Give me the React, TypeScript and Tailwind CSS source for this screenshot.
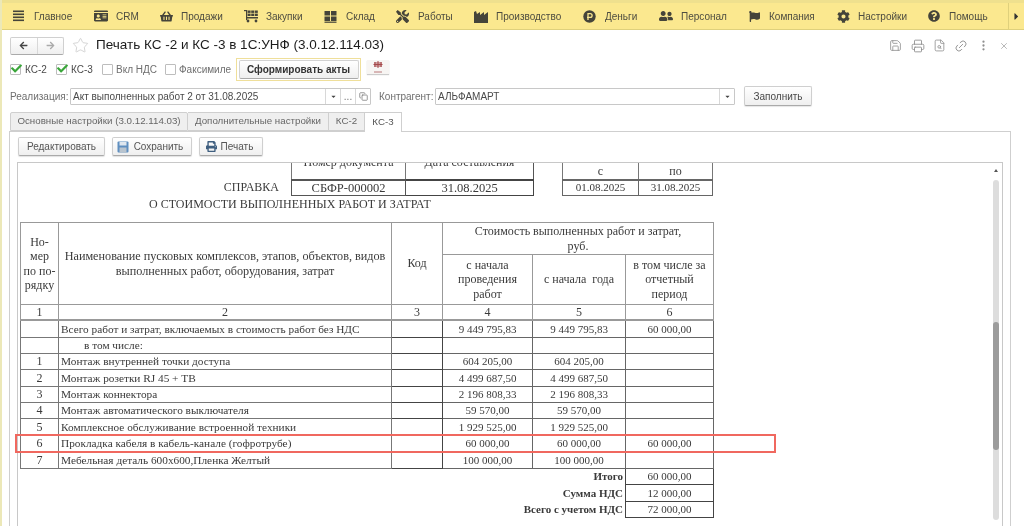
import React from "react";
import { FaIdCard, FaShoppingBasket, FaTools, FaUserFriends, FaFlag, FaCog, FaQuestionCircle, FaArrowLeft, FaArrowRight, FaPrint, FaCaretDown, FaCaretRight, FaCheck } from "react-icons/fa";
import { Save, Printer, FileSearch, Link2, MoreVertical, X, Star, Copy } from "lucide-react";

const ic = "#45443a";
const Bars = () => (<svg width="12" height="12" viewBox="0 0 12 12" fill={ic}><rect y="0.5" width="11" height="1.6"/><rect y="3.5" width="11" height="1.6"/><rect y="6.5" width="11" height="1.6"/><rect y="9.5" width="11" height="1.6"/></svg>);
const Cart = () => (<svg width="15" height="14" viewBox="0 0 15 14" fill={ic}><rect x="0" y="1" width="3" height="1.2"/><rect x="2" y="1" width="1.2" height="10"/><rect x="3.6" y="1.5" width="3" height="2.4"/><rect x="7.2" y="1.5" width="3" height="2.4"/><rect x="10.8" y="1.5" width="3" height="2.4"/><rect x="3.6" y="4.6" width="3" height="2.4"/><rect x="7.2" y="4.6" width="3" height="2.4"/><rect x="10.8" y="4.6" width="3" height="2.4"/><rect x="2" y="8" width="12" height="1.5"/><circle cx="4" cy="12" r="1.4"/><circle cx="12" cy="12" r="1.4"/></svg>);
const Wh = () => (<svg width="13" height="13" viewBox="0 0 13 13" fill={ic}><rect x="0.5" y="1" width="5.5" height="4.5"/><rect x="7" y="1" width="5.5" height="4.5"/><rect x="0.5" y="6.5" width="5.5" height="4.5"/><rect x="7" y="6.5" width="5.5" height="4.5"/><rect x="0.5" y="11.6" width="12" height="1.2"/></svg>);
const Factory = () => (<svg width="14" height="13" viewBox="0 0 14 13" fill={ic}><path d="M0 13V2l2-1 1 3 3-2v3l4-3v3l4-3v11z"/></svg>);
const Rub = () => (<svg width="13" height="13" viewBox="0 0 13 13"><circle cx="6.5" cy="6.5" r="6.2" fill={ic}/><path d="M5 10V3.6h2.2a1.8 1.8 0 0 1 0 3.8H4" fill="none" stroke="#fbe88f" strokeWidth="1.3"/></svg>);
const Floppy = () => (<svg width="12" height="12" viewBox="0 0 12 12"><rect x="0.5" y="0.5" width="11" height="11" rx="1" fill="#5f8fc0"/><rect x="2.5" y="1" width="7" height="3.5" fill="#dfe7ef"/><rect x="2.5" y="6.5" width="7" height="5" fill="#b9c4ce"/></svg>);
const Stamp = () => (<svg width="22" height="14" viewBox="0 0 22 14"><rect width="22" height="14" fill="#f7f5f3"/><path d="M11 1v7M8 2v5M14 2v5M6.5 4.5h9M7 3h8M7 6h8" stroke="#a5484a" strokeWidth="1"/><path d="M7 12h8" stroke="#b9787a" strokeWidth="1"/></svg>);

const menu = [
  { t: "Главное", w: "w-[81px]", b: "w-[21px]", i: <Bars /> },
  { t: "CRM", w: "w-[66px]", b: "w-[22px]", i: <FaIdCard size={14} color={ic} /> },
  { t: "Продажи", w: "w-[84px]", b: "w-[21px]", i: <FaShoppingBasket size={13} color={ic} /> },
  { t: "Закупки", w: "w-[80px]", b: "w-[22px]", i: <Cart /> },
  { t: "Склад", w: "w-[72px]", b: "w-[22px]", i: <Wh /> },
  { t: "Работы", w: "w-[78px]", b: "w-[22px]", i: <FaTools size={13} color={ic} /> },
  { t: "Производство", w: "w-[109px]", b: "w-[22px]", i: <Factory /> },
  { t: "Деньги", w: "w-[76px]", b: "w-[22px]", i: <Rub /> },
  { t: "Персонал", w: "w-[90px]", b: "w-[22px]", i: <FaUserFriends size={14} color={ic} /> },
  { t: "Компания", w: "w-[88px]", b: "w-[20px]", i: <FaFlag size={11} color={ic} /> },
  { t: "Настройки", w: "w-[91px]", b: "w-[21px]", i: <FaCog size={13} color={ic} /> },
  { t: "Помощь", w: "w-[70px]", b: "w-[21px]", i: <FaQuestionCircle size={12} color={ic} /> },
];

const Box = ({ on }: { on?: boolean }) => (
  <span className="relative w-[11px] h-[11px] border border-[#bdbdbd] rounded-[1px] bg-white shrink-0">
    {on && <FaCheck size={11} color="#3aa63a" className="absolute left-[0px] top-[-2px]" />}
  </span>
);

const Btn = ({ w, children }: { w: string; children: React.ReactNode }) => (
  <div className={`${w} h-[19px] flex items-center justify-center border border-[#cfcfcf] border-b-[#aaaaaa] rounded-[2px] bg-gradient-to-b from-white to-[#efefef] text-[10px] text-[#555] shadow-[0_1px_1px_rgba(0,0,0,0.12)]`}>
    {children}
  </div>
);

const c = "border border-[#777] p-0 text-center align-middle";
const rows: [string, string, string, string, string, string, string][] = [
  ["", "Всего работ и затрат, включаемых в стоимость работ без НДС", "9 449 795,83", "9 449 795,83", "60 000,00", "h-[17px]", ""],
  ["", "в том числе:", "", "", "", "h-[16px]", "pl-[25px]"],
  ["1", "Монтаж внутренней точки доступа", "604 205,00", "604 205,00", "", "h-[16px]", ""],
  ["2", "Монтаж розетки RJ 45 + ТВ", "4 499 687,50", "4 499 687,50", "", "h-[17px]", ""],
  ["3", "Монтаж коннектора", "2 196 808,33", "2 196 808,33", "", "h-[16px]", ""],
  ["4", "Монтаж автоматического выключателя", "59 570,00", "59 570,00", "", "h-[16px]", ""],
  ["5", "Комплексное обслуживание встроенной техники", "1 929 525,00", "1 929 525,00", "", "h-[17px]", ""],
  ["6", "Прокладка кабеля в кабель-канале (гофротрубе)", "60 000,00", "60 000,00", "60 000,00", "h-[16px]", ""],
  ["7", "Мебельная деталь 600х600,Пленка Желтый", "100 000,00", "100 000,00", "", "h-[17px]", ""],
];
const totals: [string, string, string][] = [["Итого", "60 000,00", "h-[16px]"], ["Сумма НДС", "12 000,00", "h-[17px]"], ["Всего с учетом НДС", "72 000,00", "h-[16px]"]];

export default function App() {
  return (
    <div className="w-[1024px] h-[526px] overflow-hidden bg-white flex flex-col border-l-2 border-[#ece8b8] font-['Liberation_Sans',Arial,sans-serif] text-[#4a4a4a] blur-[0.4px]">
      {/* section panel */}
      <div className="h-[30px] shrink-0 flex items-center bg-[#fbe88f] border-t-[3px] border-t-[#efe08e] border-b border-b-[#dfd07c] pl-[11px] text-[10px] text-[#4d4c40]">
        {menu.map((m) => (
          <div key={m.t} className={`${m.w} flex items-center shrink-0`}>
            <span className={`${m.b} flex items-center shrink-0`}>{m.i}</span>
            {m.t}
          </div>
        ))}
        <div className="ml-auto w-[16px] h-full border-l border-[#dfd07c] flex items-center justify-center"><FaCaretRight size={11} color="#333" /></div>
      </div>

      {/* title */}
      <div className="h-[27px] mt-[2px] shrink-0 flex items-center pl-[8px] pr-[15px]">
        <div className="w-[54px] h-[18px] flex border border-[#d0d0d0] border-b-[#aaa] rounded-[2px] bg-gradient-to-b from-white to-[#efefef]">
          <span className="flex-1 flex items-center justify-center border-r border-[#d8d8d8]"><FaArrowLeft size={9} color="#444" /></span>
          <span className="flex-1 flex items-center justify-center"><FaArrowRight size={9} color="#aaa" /></span>
        </div>
        <Star size={17} strokeWidth={1} color="#c4c4c4" className="ml-[8px]" />
        <span className="ml-[7px] text-[13.5px] text-[#1c1c1c] whitespace-nowrap">Печать КС -2 и КС -3 в 1С:УНФ (3.0.12.114.03)</span>
        <div className="ml-auto flex items-center text-[#8f8f8f]">
          <Save size={13} strokeWidth={1.5} className="mr-[9px]" />
          <Printer size={14} strokeWidth={1.5} className="mr-[8px]" />
          <FileSearch size={13} strokeWidth={1.5} className="mr-[8px]" />
          <Link2 size={14} strokeWidth={1.5} className="mr-[9px] -rotate-45" />
          <MoreVertical size={13} strokeWidth={2.2} className="mr-[9px]" />
          <X size={10} strokeWidth={1.5} />
        </div>
      </div>

      {/* checkboxes */}
      <div className="h-[25px] mt-[-2px] shrink-0 flex items-center pl-[8px] text-[10px]">
        <Box on /><span className="ml-[4px] w-[31px]">КС-2</span>
        <Box on /><span className="ml-[4px] w-[31px]">КС-3</span>
        <Box /><span className="ml-[3px] w-[49px] text-[#6f6f6f]">Вкл НДС</span>
        <Box /><span className="ml-[3px] w-[57px] text-[#6f6f6f]">Факсимиле</span>
        <div className="w-[125px] h-[23px] border border-[#efdf9a] flex items-center justify-center">
          <div className="w-[120px] h-[19px] flex items-center justify-center border border-[#d2d2d2] border-b-[#aaa] rounded-[2px] bg-gradient-to-b from-white to-[#efefef] font-bold text-[#333]">Сформировать акты</div>
        </div>
        <span className="ml-[6px] mt-[-6px] shadow-[0_1px_1px_rgba(0,0,0,0.2)]"><Stamp /></span>
      </div>

      {/* fields */}
      <div className="h-[20px] mt-[4px] shrink-0 flex items-center pl-[8px] text-[10px]">
        <span className="w-[60px] text-[#6f6f6f]">Реализация:</span>
        <div className="w-[301px] h-[17px] flex border border-[#c8c8c8] rounded-[1px] items-center">
          <span className="flex-1 pl-[2px] whitespace-nowrap">Акт выполненных работ 2 от 31.08.2025</span>
          <span className="w-[15px] h-full border-l border-[#d8d8d8] flex items-center justify-center"><FaCaretDown size={7} color="#444" /></span>
          <span className="w-[15px] h-full border-l border-[#d8d8d8] flex items-center justify-center text-[#777]">...</span>
          <span className="w-[15px] h-full border-l border-[#d8d8d8] flex items-center justify-center"><Copy size={9} color="#777" /></span>
        </div>
        <span className="ml-[8px] w-[56px] text-[#6f6f6f]">Контрагент:</span>
        <div className="w-[300px] h-[17px] flex border border-[#c8c8c8] rounded-[1px] items-center">
          <span className="flex-1 pl-[2px]">АЛЬФАМАРТ</span>
          <span className="w-[15px] h-full border-l border-[#d8d8d8] flex items-center justify-center"><FaCaretDown size={7} color="#444" /></span>
        </div>
        <div className="ml-[9px] w-[68px] h-[20px] flex items-center justify-center border border-[#cfcfcf] border-b-[#aaa] rounded-[2px] bg-gradient-to-b from-white to-[#efefef] shadow-[0_1px_1px_rgba(0,0,0,0.1)]">Заполнить</div>
      </div>

      {/* tabs */}
      <div className="h-[19px] mt-[6px] shrink-0 flex pl-[8px] text-[9.75px] relative z-10 whitespace-nowrap">
        <div className="w-[178px] flex items-center justify-center bg-[#efefef] border border-[#cfcfcf] rounded-t-[2px] text-[#666]">Основные настройки (3.0.12.114.03)</div>
        <div className="w-[141px] flex items-center justify-center bg-[#efefef] border border-l-0 border-[#cfcfcf] text-[#666]">Дополнительные настройки</div>
        <div className="w-[36px] flex items-center justify-center bg-[#efefef] border border-l-0 border-[#cfcfcf] text-[#666]">КС-2</div>
        <div className="w-[37px] h-[20px] flex items-center justify-center bg-white border border-b-0 border-l-0 border-[#cfcfcf] text-[#555]">КС-3</div>
      </div>

      {/* tab panel */}
      <div className="flex-1 min-h-0 ml-[7px] mr-[13px] border border-b-0 border-[#cfcfcf] flex flex-col pl-[7px] pr-[7px] pt-[5px]">
        <div className="h-[19px] ml-[1px] shrink-0 flex gap-[7px]">
          <Btn w="w-[87px]">Редактировать</Btn>
          <Btn w="w-[80px] gap-[5px] pr-[4px]"><Floppy />Сохранить</Btn>
          <Btn w="w-[64px] gap-[4px] pr-[3px]"><FaPrint size={11} color="#3f5f80" />Печать</Btn>
        </div>

        {/* sheet */}
        <div className="mt-[6px] flex-1 min-h-0 border border-b-0 border-[#c8c8c8] flex relative font-['Liberation_Serif','Times_New_Roman',serif] text-[#3a3a3a]">
          <div className="flex-1 min-w-0 overflow-hidden pl-[2px]">
            <div className="h-[33px] overflow-hidden flex items-end">
              <div className="w-[259px] text-[12px] leading-[17px] text-right mr-[12px] whitespace-nowrap">СПРАВКА</div>
              <table className="table-fixed w-[243px] border-collapse shrink-0 text-[12.5px] leading-none">
                <tbody>
                  <tr><td className="border border-[#777] p-0 text-center h-[34px] w-[114px] text-[12px]">Номер документа</td><td className="border border-[#555] p-0 text-center text-[12px]">Дата составления</td></tr>
                  <tr><td className="border border-[#555] border-t-2 p-0 text-center h-[16px]">СБФР-000002</td><td className="border border-[#444] border-t-2 p-0 text-center">31.08.2025</td></tr>
                </tbody>
              </table>
              <table className="table-fixed w-[151px] border-collapse shrink-0 ml-[28px] text-[11px] leading-none">
                <tbody>
                  <tr><td className="border border-[#777] border-t-0 p-0 text-center h-[17px] w-[76px] text-[12px]">с</td><td className="border border-[#777] border-t-0 p-0 text-center text-[12px]">по</td></tr>
                  <tr><td className="border border-[#666] border-t-2 p-0 text-center h-[16px]">01.08.2025</td><td className="border border-[#666] border-t-2 p-0 text-center">31.08.2025</td></tr>
                </tbody>
              </table>
            </div>
            <div className="h-[16px] pl-[129px] text-[12px] leading-[16px] whitespace-nowrap">О СТОИМОСТИ ВЫПОЛНЕННЫХ РАБОТ И ЗАТРАТ</div>
            <table className="mt-[10px] table-fixed w-[693px] border-collapse text-[11px] leading-[14.3px]">
              <colgroup>
                <col className="w-[38px]" /><col className="w-[333px]" /><col className="w-[51px]" /><col className="w-[90px]" /><col className="w-[93px]" /><col className="w-[88px]" />
              </colgroup>
              <tbody>
                <tr className="h-[32px]">
                  <td rowSpan={2} className={`${c} border-[#999] text-[12px]`}>Но-<br />мер<br />по по-<br />рядку</td>
                  <td rowSpan={2} className={`${c} border-[#999] text-[12.2px]`}>Наименование пусковых комплексов, этапов, объектов, видов<br />выполненных работ, оборудования, затрат</td>
                  <td rowSpan={2} className={`${c} border-[#999] text-[12px]`}>Код</td>
                  <td colSpan={3} className={`${c} border-[#999] text-[12px]`}>Стоимость выполненных работ и затрат,<br />руб.</td>
                </tr>
                <tr className="h-[50px]">
                  <td className={`${c} border-[#999] text-[12px]`}>с начала<br />проведения<br />работ</td>
                  <td className={`${c} border-[#999] text-[12px]`}>с начала{"\u00a0 "}года</td>
                  <td className={`${c} border-[#999] text-[12px]`}>в том числе за<br />отчетный<br />период</td>
                </tr>
                <tr className="h-[15px] text-[12px]">
                  {["1", "2", "3", "4", "5", "6"].map((n) => (<td key={n} className={`${c} border-[#999] border-b-2`}>{n}</td>))}
                </tr>
                {rows.map((r, idx) => (
                  <tr key={idx} className={`${r[5]} text-[11.3px]`}>
                    <td className={`${c} text-[12px]`}>{r[0]}</td>
                    <td className={`border border-[#777] p-0 pl-[2px] whitespace-nowrap ${r[6]}`}>{r[1]}</td>
                    <td className="border border-[#444] p-0"></td>
                    <td className="border border-[#666] p-0 text-center text-[11px]">{r[2]}</td>
                    <td className="border border-[#666] p-0 text-center text-[11px]">{r[3]}</td>
                    <td className="border border-[#666] p-0 text-center text-[11px]">{r[4]}</td>
                  </tr>
                ))}
                {totals.map((r) => (
                  <tr key={r[0]} className={r[2]}>
                    <td colSpan={5} className="p-0 pr-[2px] text-right font-bold text-[11px]">{r[0]}</td>
                    <td className="border border-[#444] p-0 text-center text-[11px]">{r[1]}</td>
                  </tr>
                ))}
              </tbody>
            </table>
          </div>
          {/* scrollbar */}
          <div className="w-[8px] mr-[2px] shrink-0 flex flex-col items-center pt-[6px]">
            <span className="w-0 h-0 border-x-[2px] border-x-transparent border-b-[3px] border-b-[#555]" />
            <div className="mt-[8px] w-[6px] h-[340px] rounded-[3px] bg-[#dddddd] flex flex-col">
              <div className="mt-[142px] h-[128px] bg-[#9c9c9c] rounded-[3px]" />
            </div>
          </div>
          {/* red highlight */}
          <div className="absolute left-[-3px] top-[271px] w-[761px] h-[19px] border-2 border-[#f0685f]" />
        </div>
      </div>
    </div>
  );
}
